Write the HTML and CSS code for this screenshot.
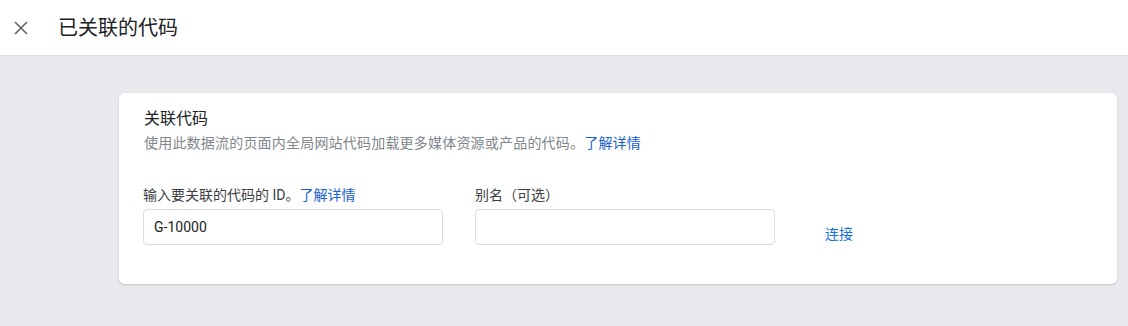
FILE: index.html
```html
<!DOCTYPE html>
<html lang="zh-CN">
<head>
    <meta charset="UTF-8">
    <title>已关联的代码</title>
    <link rel="stylesheet" href="styles.css">
</head>
<body>
    <!-- Top bar -->
    <div class="top-bar">
        <button class="close-btn" aria-label="关闭">
            <svg width="14" height="14" viewBox="0 0 14 14">
                <path d="M1 1L13 13M13 1L1 13" stroke="#5f6368" stroke-width="1.6" fill="none"/>
            </svg>
        </button>
        <h1 class="page-title">已关联的代码</h1>
    </div>

    <div class="content">
        <div class="card">
            <h2 class="card-title">关联代码</h2>
            <p class="card-desc">使用此数据流的页面内全局网站代码加载更多媒体资源或产品的代码。<a href="#" class="link">了解详情</a></p>

            <div class="form-row">
                <div class="field">
                    <label class="field-label">输入要关联的代码的 ID。<a href="#" class="link">了解详情</a></label>
                    <input type="text" class="text-input" value="G-10000">
                </div>
                <div class="field">
                    <label class="field-label">别名（可选）</label>
                    <input type="text" class="text-input">
                </div>
                <button class="connect-btn">连接</button>
            </div>
        </div>
    </div>
</body>
</html>
```

FILE: styles.css
```css
* {
    box-sizing: border-box;
    margin: 0;
    padding: 0;
    font-family: Roboto, "Noto Sans CJK SC", sans-serif;
}

body {
    background-color: #e8e8ed;
    width: 1128px;
    height: 326px;
    overflow: hidden;
}

/* Top bar */
.top-bar {
    height: 56px;
    background: #fff;
    border-bottom: 1px solid #dadce0;
    display: flex;
    align-items: center;
    padding-left: 14px;
}

.close-btn {
    background: none;
    border: none;
    width: 14px;
    height: 14px;
    display: flex;
    cursor: pointer;
}

.page-title {
    margin-left: 30px;
    font-size: 20px;
    font-weight: 400;
    color: #202124;
    margin-top: -2px;
}

/* Card */
.content {
    padding: 37px 11px 0 119px;
}

.card {
    background: #fff;
    border-radius: 6px;
    box-shadow: 0 1px 2px rgba(60, 64, 67, 0.2);
    height: 191px;
    padding: 14px 25px 0;
}

.card-title {
    font-size: 16px;
    font-weight: 400;
    color: #202124;
    line-height: 24px;
}

.card-desc {
    font-size: 14px;
    color: #80868b;
    margin-top: 2px;
    line-height: 20px;
    letter-spacing: 0.2px;
}

.link {
    color: #1a5fd0;
    text-decoration: none;
}

.form-row {
    display: flex;
    align-items: flex-end;
    margin-top: 32px;
}

.field {
    display: flex;
    flex-direction: column;
    width: 300px;
    margin-right: 32px;
}

.field:first-child {
    margin-left: -1px;
}

.field-label {
    font-size: 14px;
    color: #3c4043;
    line-height: 20px;
    margin-bottom: 4px;
}

.text-input {
    height: 36px;
    border: 1px solid #dadce0;
    border-radius: 4px;
    padding: 0 10px;
    font-size: 14px;
    color: #202124;
    outline: none;
}

.connect-btn {
    background: none;
    border: none;
    color: #1a6fe0;
    font-size: 14px;
    margin-left: 18px;
    margin-bottom: -4px;
    padding: 6px 0;
    cursor: pointer;
}
```
